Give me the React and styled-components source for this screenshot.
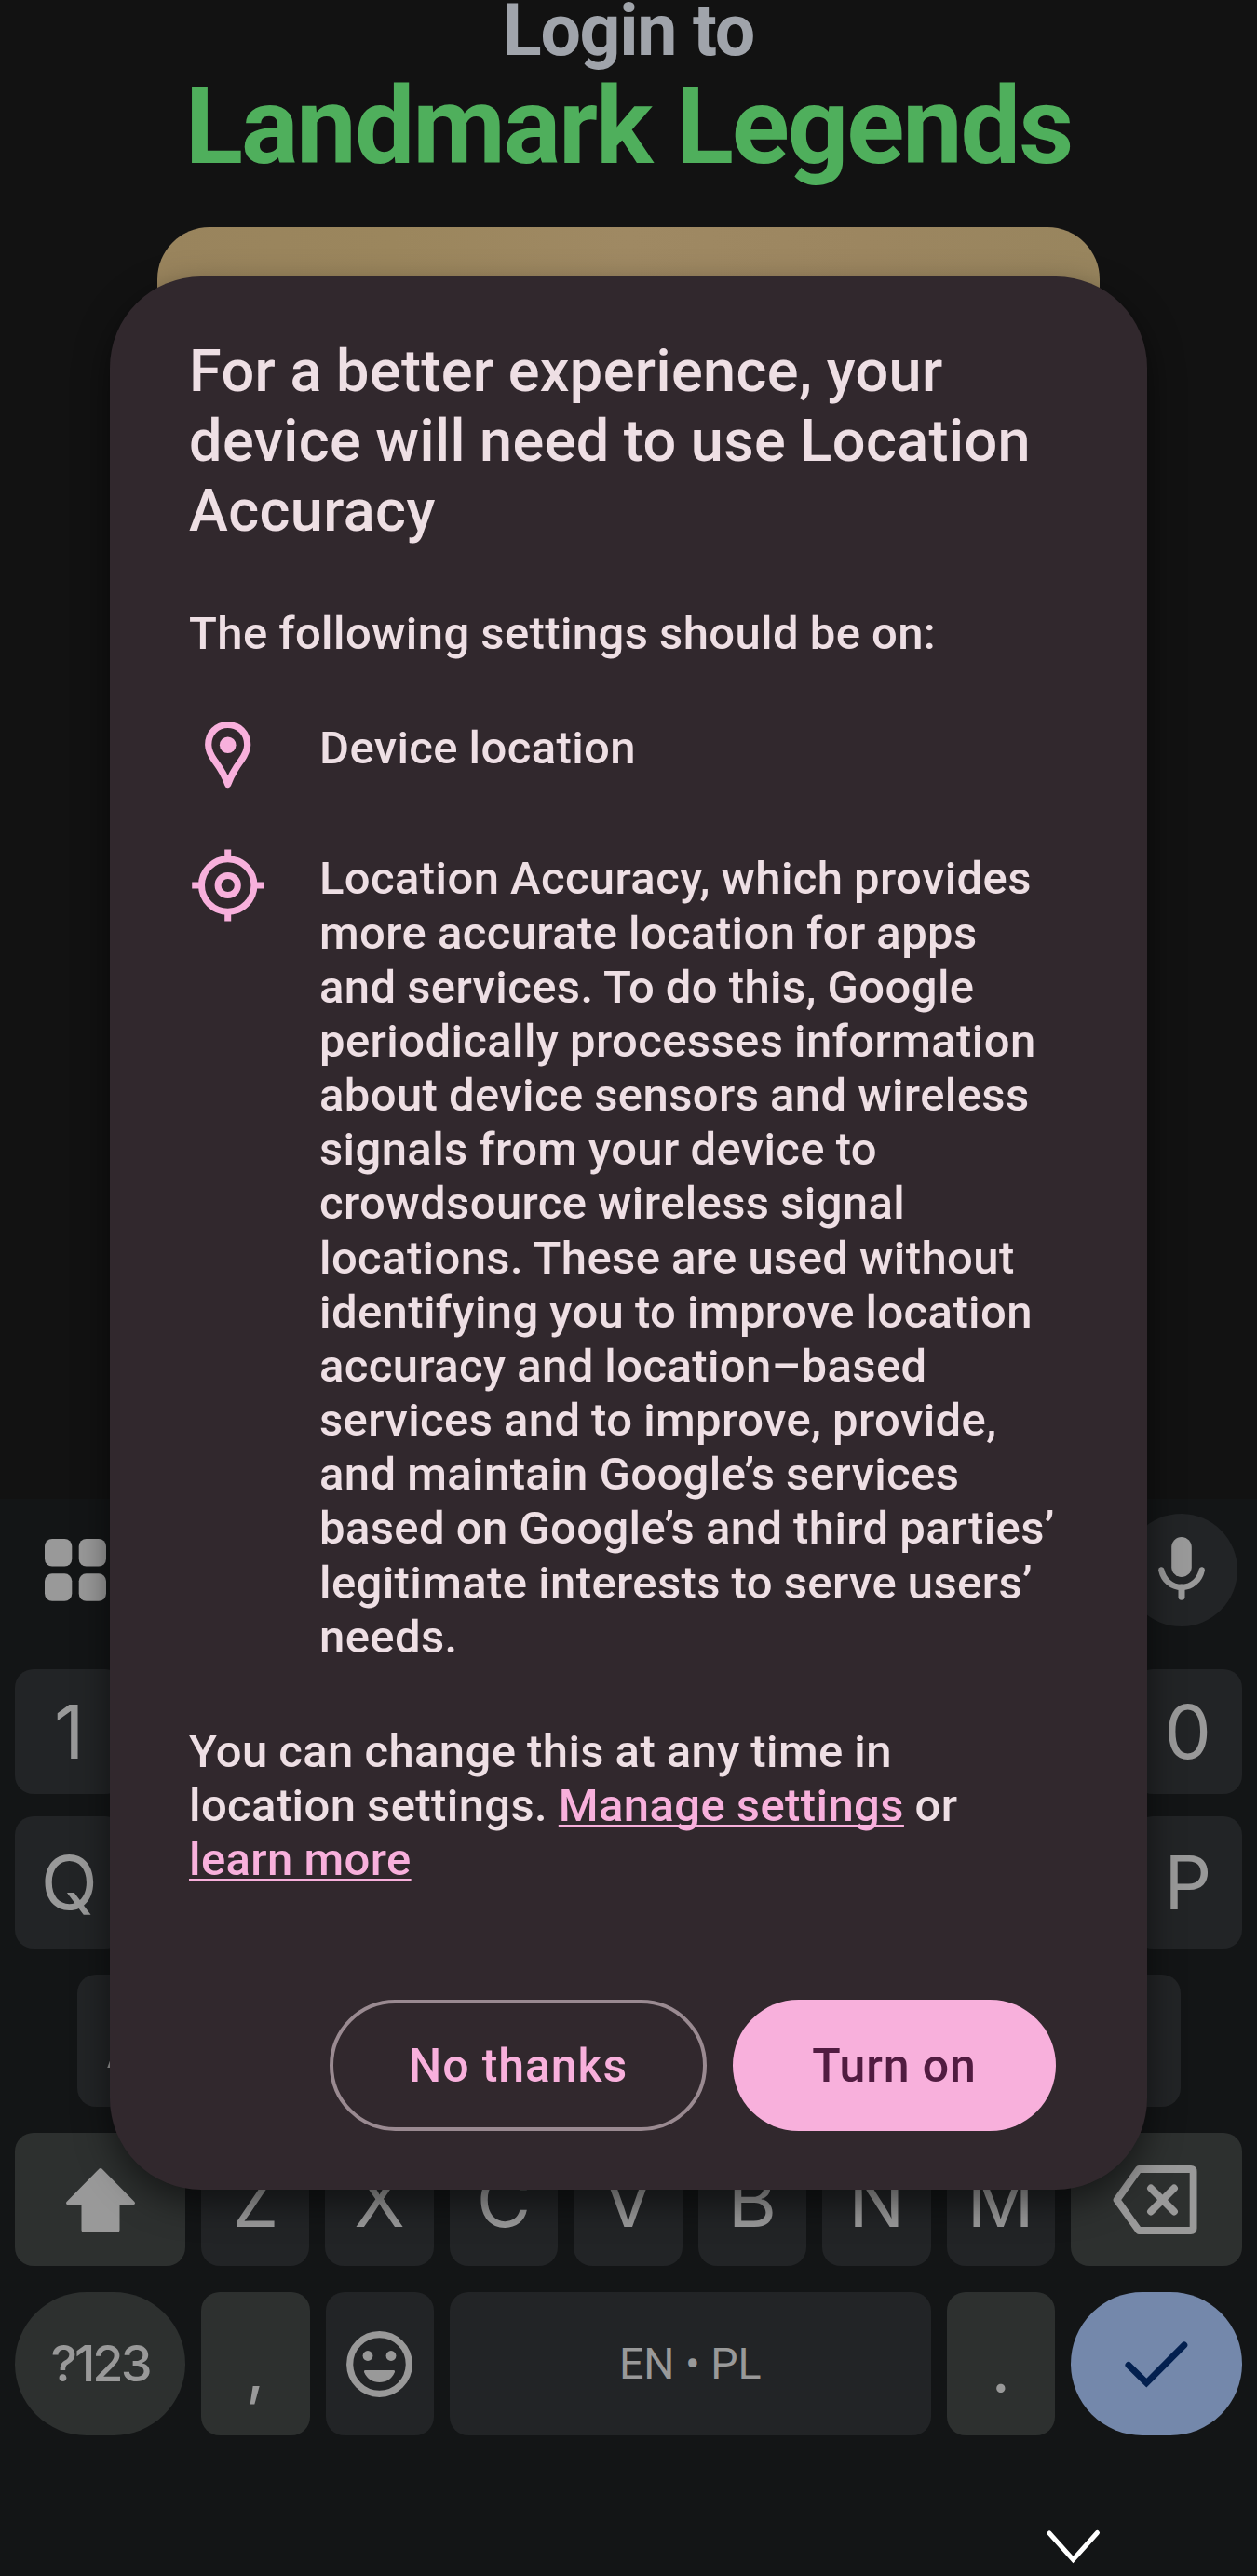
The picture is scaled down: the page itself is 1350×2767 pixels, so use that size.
import React from "react";
import styled, { createGlobalStyle } from "styled-components";

const GlobalStyle = createGlobalStyle`
  * { box-sizing: border-box; }
  body { margin: 0; background: #121212; font-family: Roboto, sans-serif; }
`;

const Screen = styled.div`
  position: relative;
  display: flex;
  flex-direction: column;
  width: 1350px;
  height: 2767px;
  overflow: hidden;
  background: #121212;
`;

/* ---------- login page ---------- */

const LoginPage = styled.main`
  display: flex;
  flex-direction: column;
  align-items: center;
  height: 1610px;
`;

const Kicker = styled.p`
  margin: -12px 0 0;
  height: 90px;
  font-size: 77px;
  line-height: 90px;
  font-weight: 700;
  letter-spacing: -1.3px;
  color: #a0a4ab;
`;

const Brand = styled.h1`
  margin: 0;
  height: 116px;
  font-size: 115px;
  line-height: 116px;
  font-weight: 700;
  letter-spacing: -2.15px;
  color: #4faf5c;
`;

const Cover = styled.div`
  width: 1012px;
  height: 400px;
  margin-top: 50px;
  border-radius: 56px;
  background: linear-gradient(90deg, #99845d 0%, #9b865d 25%, #9f8963 50%, #9c8660 75%, #98855e 100%);
`;

/* ---------- keyboard ---------- */

const Keyboard = styled.section`
  display: flex;
  flex-direction: column;
  height: 1157px;
  padding: 0 16px;
  background: #131516;
`;

const Toolbar = styled.div`
  display: flex;
  align-items: center;
  justify-content: space-between;
  height: 121px;
  margin: 16px 5px 46px 32px;
`;

const MicButton = styled.div`
  display: flex;
  align-items: center;
  justify-content: center;
  width: 121px;
  height: 121px;
  border-radius: 50%;
  background: #222426;
`;

const KeyRow = styled.div`
  display: flex;
  gap: 17px;
  height: ${(p) => p.$h}px;
  margin-bottom: ${(p) => p.$after}px;
  padding: 0 ${(p) => p.$inset || 0}px;
`;

const Key = styled.div`
  display: flex;
  align-items: center;
  justify-content: center;
  flex: ${(p) => (p.$w ? `0 0 ${p.$w}px` : "1 1 0")};
  min-width: 0;
  border-radius: ${(p) => (p.$pill ? 77 : 20)}px;
  background: ${(p) => (p.$tone === "accent" ? "#7488ab" : p.$tone === "special" ? "#2d302f" : "#222426")};
  color: #999;
  font-family: Inter, sans-serif;
  font-size: 80px;
  line-height: 1;
`;

const ModeLabel = styled.span`
  font-size: 54px;
  font-weight: 500;
  letter-spacing: -3px;
`;

const SpaceLabel = styled.span`
  font-family: Roboto, sans-serif;
  font-size: 46.5px;
`;

const Punctuation = styled.span`
  font-size: 70px;
  padding-top: 11px;
`;

const NavBar = styled.nav`
  display: flex;
  justify-content: flex-end;
  padding: 102px 153px 0 0;
`;

/* ---------- dialog ---------- */

const Dialog = styled.section`
  position: absolute;
  left: 118px;
  top: 297px;
  display: flex;
  flex-direction: column;
  width: 1114px;
  height: 2055px;
  padding: 64px 98px 63px 85px;
  border-radius: 98px;
  background: #31282d;
  color: #eedfe4;
  font-size: 49px;
  line-height: 58.17px;
  font-weight: 500;
  letter-spacing: 0.4px;
  word-spacing: -0.9px;
  box-shadow: 0 14px 36px rgba(0, 0, 0, 0.5);
  white-space: nowrap;
`;

const Title = styled.h2`
  margin: 0;
  font-size: 63px;
  line-height: 75px;
  font-weight: 500;
`;

const Lead = styled.p`
  margin: 66px 0 0;
`;

const Setting = styled.div`
  display: flex;
  margin-top: ${(p) => p.$gap}px;
`;

const SettingIcon = styled.div`
  flex: 0 0 140px;
  height: 58px;
  margin-top: ${(p) => p.$lift}px;
`;

const SettingText = styled.p`
  margin: 0;
`;

const Footnote = styled.p`
  margin: 65px 0 0;
`;

const Link = styled.a`
  color: #f8b0dc;
  text-decoration: underline;
  text-decoration-thickness: 3px;
  text-decoration-skip-ink: none;
  text-underline-offset: 4px;
`;

const Actions = styled.div`
  display: flex;
  justify-content: flex-end;
  gap: 28px;
  margin-top: auto;
`;

const Button = styled.button`
  width: ${(p) => p.$w}px;
  height: 141px;
  padding: 0;
  border: ${(p) => (p.$filled ? "none" : "4px solid #9a8a91")};
  border-radius: 71px;
  background: ${(p) => (p.$filled ? "#f8b0dc" : "transparent")};
  color: ${(p) => (p.$filled ? "#511c41" : "#f8b0dc")};
  font-family: Roboto, sans-serif;
  font-size: 50px;
  font-weight: 500;
  letter-spacing: 0.9px;
`;

const Icon = styled.svg`
  display: block;
  flex: none;
  overflow: visible;
`;

/* ---------- icons ---------- */

const GridIcon = () => (
  <Icon width="66" height="67" viewBox="0 0 66 67" fill="#999">
    <rect width="29.3" height="29.5" rx="8" />
    <rect x="36.7" width="29.3" height="29.5" rx="8" />
    <rect y="37.3" width="29.3" height="29.5" rx="8" />
    <rect x="36.7" y="37.3" width="29.3" height="29.5" rx="8" />
  </Icon>
);

const MicIcon = () => (
  <Icon width="50" height="72" viewBox="0 0 50 72" fill="none" stroke="#999">
    <rect x="14.2" y="0" width="21.6" height="43" rx="10.8" fill="#999" stroke="none" />
    <path d="M3.3 35.5C5.5 46 14 54 25 54S44.5 46 46.7 35.5" strokeWidth="6.4" strokeLinecap="round" />
    <path d="M25 54V64.2" strokeWidth="7" strokeLinecap="round" />
  </Icon>
);

const ShiftIcon = () => (
  <Icon width="76" height="70" viewBox="0 0 76 70">
    <path
      d="M38 3L73 38.3H56.5V67.5H19.5V38.3H3Z"
      fill="#999"
      stroke="#999"
      strokeWidth="4"
      strokeLinejoin="round"
    />
  </Icon>
);

const BackspaceIcon = () => (
  <Icon width="94" height="74" viewBox="0 0 94 74" fill="none" stroke="#999" strokeWidth="7.8">
    <path d="M28 4H84Q86.6 4 86.6 6.6V67.4Q86.6 70 84 70H28L4.5 37Z" strokeLinejoin="round" />
    <path d="M41 24.5L66 49.5M66 24.5L41 49.5" strokeLinecap="round" />
  </Icon>
);

const EmojiIcon = () => (
  <Icon width="71" height="71" viewBox="0 0 71 71" fill="#999">
    <circle cx="35.5" cy="35.5" r="31.8" fill="none" stroke="#999" strokeWidth="7.2" />
    <circle cx="23" cy="26.5" r="5.4" />
    <circle cx="48" cy="26.5" r="5.4" />
    <path d="M20.5 42H50.5Q52.7 42 51.8 44.2C49 51 43 55 35.5 55S22 51 19.2 44.2Q18.3 42 20.5 42Z" />
  </Icon>
);

const CheckIcon = () => (
  <Icon width="68" height="49" viewBox="0 0 68 49">
    <path d="M4 25.5L23.3 44.6L63.8 4" fill="none" stroke="#03204f" strokeWidth="7" strokeLinecap="round" />
  </Icon>
);

const ChevronIcon = () => (
  <Icon width="57" height="36" viewBox="0 0 57 36">
    <path d="M3 3L28.5 31.5L54.5 2.5" fill="none" stroke="#fff" strokeWidth="5" strokeLinecap="round" />
  </Icon>
);

const PinIcon = () => (
  <Icon width="84" height="84" viewBox="0 0 84 84">
    <path
      d="M41.7 10.5C29.8 10.5 20.7 19.5 20.7 32C20.7 38 23.3 43 27.5 49C33 56.5 37.500 62.5 41.7 74.5C45.9 62.5 50.4 56.5 55.9 49C60.1 43 62.7 38 62.7 32C62.7 19.5 53.6 10.5 41.7 10.5Z"
      fill="none"
      stroke="#f8b0dc"
      strokeWidth="7.2"
      strokeLinejoin="round"
    />
    <circle cx="41.7" cy="32.2" r="8.8" fill="#f8b0dc" />
  </Icon>
);

const TargetIcon = () => (
  <Icon width="84" height="84" viewBox="0 0 84 84" fill="none" stroke="#f8b0dc" strokeWidth="7">
    <circle cx="41.7" cy="42" r="28.2" />
    <circle cx="41.7" cy="42" r="10.6" />
    <path d="M41.7 3.5V12M41.7 72V80.5M3.2 42H12M71.5 42H80.2" />
  </Icon>
);

/* ---------- data ---------- */

const numberKeys = ["1", "", "", "", "", "", "", "", "", "0"];
const topKeys = ["Q", "", "", "", "", "", "", "", "", "P"];
const homeKeys = ["A", "", "", "", "", "", "", "", ""];
const bottomKeys = ["Z", "X", "C", "V", "B", "N", "M"];

const accuracyLines = [
  "Location Accuracy, which provides",
  "more accurate location for apps",
  "and services. To do this, Google",
  "periodically processes information",
  "about device sensors and wireless",
  "signals from your device to",
  "crowdsource wireless signal",
  "locations. These are used without",
  "identifying you to improve location",
  "accuracy and location–based",
  "services and to improve, provide,",
  "and maintain Google’s services",
  "based on Google’s and third parties’",
  "legitimate interests to serve users’",
  "needs.",
];

const Lines = ({ lines }) =>
  lines.map((line, i) => (
    <React.Fragment key={line}>
      {i > 0 && <br />}
      {line}
    </React.Fragment>
  ));

const Keys = ({ labels }) => labels.map((label, i) => <Key key={i}>{label}</Key>);

export default function App() {
  return (
    <Screen>
      <GlobalStyle />
      <LoginPage>
        <Kicker>Login to</Kicker>
        <Brand>Landmark Legends</Brand>
        <Cover />
      </LoginPage>

      <Keyboard>
        <Toolbar>
          <GridIcon />
          <MicButton>
            <MicIcon />
          </MicButton>
        </Toolbar>
        <KeyRow $h={134} $after={24}>
          <Keys labels={numberKeys} />
        </KeyRow>
        <KeyRow $h={142} $after={28}>
          <Keys labels={topKeys} />
        </KeyRow>
        <KeyRow $h={142} $after={28} $inset={66.5}>
          <Keys labels={homeKeys} />
        </KeyRow>
        <KeyRow $h={143} $after={28}>
          <Key $w={183} $tone="special">
            <ShiftIcon />
          </Key>
          <Keys labels={bottomKeys} />
          <Key $w={184} $tone="special">
            <BackspaceIcon />
          </Key>
        </KeyRow>
        <KeyRow $h={154} $after={0}>
          <Key $w={183} $tone="special" $pill>
            <ModeLabel>?123</ModeLabel>
          </Key>
          <Key $w={116.5} $tone="special">
            <Punctuation>,</Punctuation>
          </Key>
          <Key $w={116.5}>
            <EmojiIcon />
          </Key>
          <Key>
            <SpaceLabel>EN • PL</SpaceLabel>
          </Key>
          <Key $w={116.5} $tone="special">
            <Punctuation>.</Punctuation>
          </Key>
          <Key $w={184} $tone="accent" $pill>
            <CheckIcon />
          </Key>
        </KeyRow>
        <NavBar>
          <ChevronIcon />
        </NavBar>
      </Keyboard>

      <Dialog>
        <Title>
          For a better experience, your
          <br />
          device will need to use Location
          <br />
          Accuracy
        </Title>
        <Lead>The following settings should be on:</Lead>
        <Setting $gap={65}>
          <SettingIcon $lift={-7}>
            <PinIcon />
          </SettingIcon>
          <SettingText>Device location</SettingText>
        </Setting>
        <Setting $gap={82}>
          <SettingIcon $lift={-6}>
            <TargetIcon />
          </SettingIcon>
          <SettingText>
            <Lines lines={accuracyLines} />
          </SettingText>
        </Setting>
        <Footnote>
          You can change this at any time in
          <br />
          location settings. <Link>Manage settings</Link> or
          <br />
          <Link>learn more</Link>
        </Footnote>
        <Actions>
          <Button $w={405}>No thanks</Button>
          <Button $w={347} $filled>
            Turn on
          </Button>
        </Actions>
      </Dialog>
    </Screen>
  );
}
